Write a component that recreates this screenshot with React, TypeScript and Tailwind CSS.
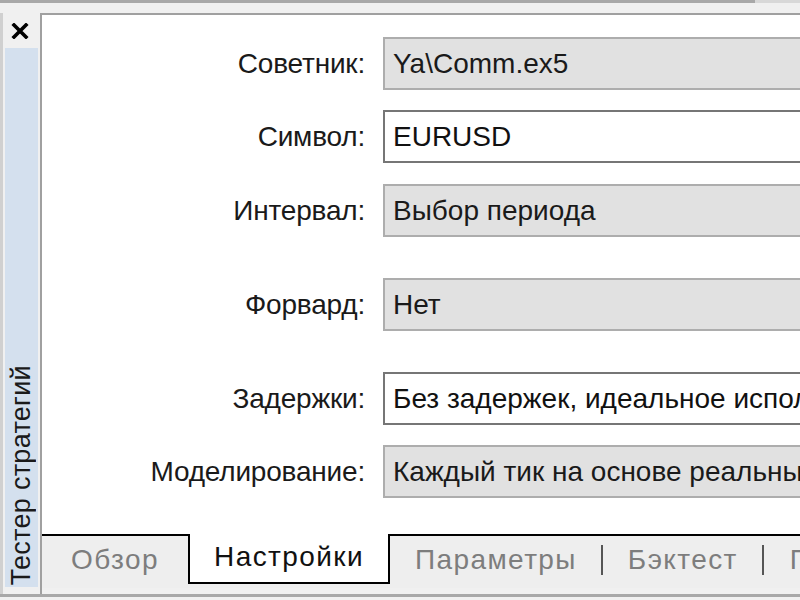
const font = { fontFamily: '"Liberation Sans", Arial, sans-serif' };

type Row = { label: string; value: string; editable?: boolean; gap: string };

const rows: Row[] = [
  { label: "Советник:", value: "Ya\\Comm.ex5", gap: "mt-[22px]" },
  { label: "Символ:", value: "EURUSD", editable: true, gap: "mt-[20px]" },
  { label: "Интервал:", value: "Выбор периода", gap: "mt-[21px]" },
  { label: "Форвард:", value: "Нет", gap: "mt-[41px]" },
  { label: "Задержки:", value: "Без задержек, идеальное исполнение", editable: true, gap: "mt-[41px]" },
  { label: "Моделирование:", value: "Каждый тик на основе реальных тиков", gap: "mt-[20px]" },
];

function CloseIcon() {
  return (
    <svg width="18" height="16" viewBox="0 0 18 16">
      <path d="M3 2 L15 14 M15 2 L3 14" stroke="#000" strokeWidth="3.6" strokeLinecap="square" />
    </svg>
  );
}

function FieldRow({ row }: { row: Row }) {
  return (
    <div className={`flex items-center ${row.gap}`}>
      <div className="w-[323px] shrink-0 text-right text-[28px] tracking-[-0.2px] text-[#1a1a1a] leading-none">{row.label}</div>
      <div
        className={`ml-[18px] h-[53px] w-[520px] shrink-0 flex items-center pl-[8px] text-[28px] leading-none whitespace-nowrap overflow-hidden border-2 ${
          row.editable ? "bg-white border-[#767676] text-[#111]" : "bg-[#e1e1e1] border-[#adadad] text-[#1a1a1a]"
        }`}
      >
        {row.value}
      </div>
    </div>
  );
}

function Tabs() {
  return (
    <div className="h-[54px] flex bg-[#eeeeee] text-[28px] tracking-[1.4px] leading-none">
      <div className="w-[146px] shrink-0 border-t-2 border-black flex items-center justify-center pb-[5px] text-[#7d7d7d]">Обзор</div>
      <div className="w-[202px] shrink-0 h-[50px] bg-white border-2 border-t-0 border-black flex items-center justify-center pb-[3px] text-[#111]">
        Настройки
      </div>
      <div className="flex-1 border-t-2 border-black flex items-center pb-[5px] text-[#7d7d7d] whitespace-nowrap overflow-hidden">
        <span className="ml-[25px]">Параметры</span>
        <span className="ml-[24px] w-[2px] h-[30px] bg-[#555] shrink-0" />
        <span className="ml-[25px]">Бэктест</span>
        <span className="ml-[24px] w-[2px] h-[30px] bg-[#555] shrink-0" />
        <span className="ml-[26px]">Графики</span>
      </div>
    </div>
  );
}

export default function App() {
  return (
    <div className="w-[800px] h-[600px] overflow-hidden bg-[#f0f0f0] flex flex-col" style={font}>
      <div className="h-[3px] flex shrink-0">
        <div className="w-[755px] bg-[#a8a8a8]" />
        <div className="flex-1 bg-[#d8d8d8]" />
      </div>
      <div className="flex-1 flex min-h-0 pt-[10px]">
        <div className="w-[40px] shrink-0 flex flex-col border-l-[3px] border-[#d0d0d0]">
          <div className="h-[35px] flex items-center justify-center pr-[3px]">
            <CloseIcon />
          </div>
          <div className="flex-1 ml-[2px] mr-[2px] mb-[7px] bg-[#d4e0ee] flex items-end justify-center pb-[2px]">
            <div className="[writing-mode:vertical-rl] rotate-180 text-[27px] tracking-[0.3px] leading-none text-[#1a1a1a] whitespace-nowrap">
              Тестер стратегий
            </div>
          </div>
        </div>
        <div className="flex-1 flex flex-col border-t-2 border-l-2 border-[#a0a0a0] bg-white min-w-0">
          <div className="flex-1 overflow-hidden">
            {rows.map((r) => (
              <FieldRow key={r.label} row={r} />
            ))}
          </div>
          <Tabs />
          <div className="h-[6px] bg-[#f0f0f0]" />
        </div>
      </div>
      <div className="h-[3px] shrink-0 bg-[#a8a8a8]" />
      <div className="h-[3px] shrink-0 bg-[#f0f0f0]" />
    </div>
  );
}
